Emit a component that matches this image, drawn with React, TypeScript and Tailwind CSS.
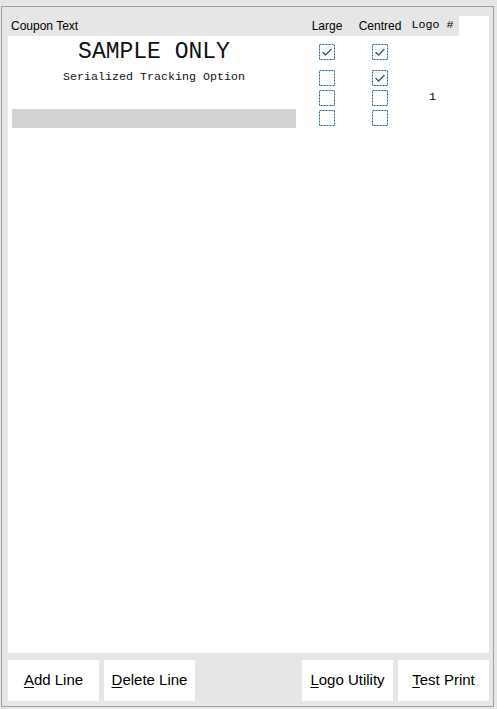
import React from 'react';

interface CouponLine {
  text: string;
  large: boolean;
  centred: boolean;
  logo?: string;
  big?: boolean;
  blank?: boolean;
  height: string;
}

const lines: CouponLine[] = [
  { text: 'SAMPLE ONLY', large: true, centred: true, big: true, height: 'h-[32px]' },
  { text: 'Serialized Tracking Option', large: false, centred: true, height: 'h-[20px]' },
  { text: '', large: false, centred: false, logo: '1', height: 'h-[20px]' },
  { text: '', large: false, centred: false, blank: true, height: 'h-[20px]' },
];

const DashedCheck: React.FC<{ checked: boolean }> = ({ checked }) => (
  <svg width="16" height="16" viewBox="0 0 16 16" className="block">
    <rect x="0.5" y="0.5" width="15" height="15" fill="none" stroke="#1f5e94" strokeWidth="1" strokeDasharray="2 1" />
    {checked && <polyline points="3.5,8 6.5,11 12.5,5" fill="none" stroke="#2d5a7f" strokeWidth="1.3" />}
  </svg>
);

const ToolButton: React.FC<{ hot: string; rest: string }> = ({ hot, rest }) => (
  <button className="w-[91px] h-[41px] bg-white text-[15px] text-black flex items-center justify-center">
    <span><span className="underline underline-offset-[2px]">{hot}</span>{rest}</span>
  </button>
);

export default function App() {
  return (
    <div className="w-[497px] h-[709px] bg-[#e6e6e6] pt-[6px] pl-[1px] font-['Liberation_Sans',Arial,sans-serif]">
      <div className="w-[493px] h-[701px] border border-[#a0a0a0] pt-[9px] pl-[6px] pr-[4px] pb-[5px] flex flex-col">
        <div className="w-[481px] h-[637px] bg-white flex flex-col">
          <div className="flex h-[20px] items-center text-[12px] text-black">
            <div className="w-[292px] h-full bg-[#e6e6e6] pl-[3px] flex items-center">Coupon Text</div>
            <div className="w-[54px] h-full bg-[#e6e6e6] flex items-center justify-center">Large</div>
            <div className="w-[52px] h-full bg-[#e6e6e6] flex items-center justify-center">Centred</div>
            <div className="w-[53px] h-full bg-[#e6e6e6] flex items-center justify-center font-['Liberation_Mono','Courier_New',monospace] text-[11.67px]">Logo #</div>
          </div>
          {lines.map((line, i) => (
            <div key={i} className={`flex items-center ${line.height}`}>
              <div className="w-[292px] px-[4px] flex items-center justify-center">
                {line.blank ? (
                  <div className="w-full h-[19px] bg-[#d3d3d3]" />
                ) : (
                  <span className={`font-['Liberation_Mono','Courier_New',monospace] text-[#111] whitespace-pre ${line.big ? 'text-[23px] leading-none' : 'text-[11.67px]'}`}>
                    {line.text}
                  </span>
                )}
              </div>
              <div className="w-[54px] flex justify-center">
                <DashedCheck checked={line.large} />
              </div>
              <div className="w-[52px] flex justify-center">
                <DashedCheck checked={line.centred} />
              </div>
              <div className="w-[53px] flex justify-center font-['Liberation_Mono','Courier_New',monospace] text-[11.67px]">
                {line.logo}
              </div>
            </div>
          ))}
        </div>
        <div className="mt-[7px] flex gap-[5px]">
          <ToolButton hot="A" rest="dd Line" />
          <ToolButton hot="D" rest="elete Line" />
          <div className="flex-1" />
          <ToolButton hot="L" rest="ogo Utility" />
          <ToolButton hot="T" rest="est Print" />
        </div>
      </div>
    </div>
  );
}
